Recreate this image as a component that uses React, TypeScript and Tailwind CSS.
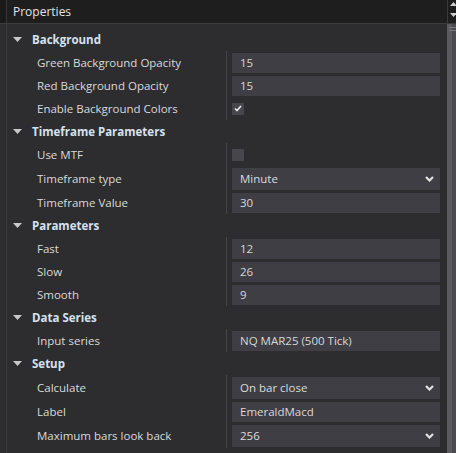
import React from "react";

type Row =
  | { kind: "cat"; label: string }
  | { kind: "text"; label: string; value: string }
  | { kind: "select"; label: string; value: string }
  | { kind: "check"; label: string; checked: boolean };

const ROWS: Row[] = [
  { kind: "cat", label: "Background" },
  { kind: "text", label: "Green Background Opacity", value: "15" },
  { kind: "text", label: "Red Background Opacity", value: "15" },
  { kind: "check", label: "Enable Background Colors", checked: true },
  { kind: "cat", label: "Timeframe Parameters" },
  { kind: "check", label: "Use MTF", checked: false },
  { kind: "select", label: "Timeframe type", value: "Minute" },
  { kind: "text", label: "Timeframe Value", value: "30" },
  { kind: "cat", label: "Parameters" },
  { kind: "text", label: "Fast", value: "12" },
  { kind: "text", label: "Slow", value: "26" },
  { kind: "text", label: "Smooth", value: "9" },
  { kind: "cat", label: "Data Series" },
  { kind: "text", label: "Input series", value: "NQ MAR25 (500 Tick)" },
  { kind: "cat", label: "Setup" },
  { kind: "select", label: "Calculate", value: "On bar close" },
  { kind: "text", label: "Label", value: "EmeraldMacd" },
  { kind: "select", label: "Maximum bars look back", value: "256" },
];

function Chevron() {
  return (
    <svg width="9" height="6" viewBox="0 0 9 6" className="shrink-0">
      <path d="M1 1 L4.5 4.5 L8 1" fill="none" stroke="#e2e2e2" strokeWidth="2.2" />
    </svg>
  );
}

function Category({ label }: { label: string }) {
  return (
    <div className="flex h-[23px] items-center pl-[6px]">
      <svg width="9" height="5" viewBox="0 0 9 5" className="shrink-0">
        <polygon points="0,0 9,0 4.5,5" fill="#c9c9c9" />
      </svg>
      <span className="ml-[10px] font-bold text-[#d7e1ee]">{label}</span>
    </div>
  );
}

function Property({ row }: { row: Exclude<Row, { kind: "cat" }> }) {
  const tall = row.kind === "select";
  return (
    <div className={`flex ${tall ? "h-[25px]" : "h-[23px]"}`}>
      <div className="flex w-[220px] items-center border-r border-[#45454a] pl-[30px] text-[#dadada]">
        {row.label}
      </div>
      <div className="flex flex-1 items-center pl-[5px] pr-[7px]">
        {row.kind === "text" && (
          <div className="flex h-5 w-full items-center bg-[#3e3e44] pl-[8px] text-[#d8d8d8]">{row.value}</div>
        )}
        {row.kind === "select" && (
          <div className="flex h-[22px] w-full items-center justify-between bg-[#3e3e44] pl-[8px] pr-[6px] text-[#dcdcdc]">
            <span>{row.value}</span>
            <Chevron />
          </div>
        )}
        {row.kind === "check" && (
          <div className="flex h-3 w-3 items-center justify-center bg-[#46464b]">
            {row.checked && (
              <svg width="8" height="7" viewBox="0 0 8 7">
                <path d="M1 3.5 L3 5.5 L7 1" fill="none" stroke="#ececec" strokeWidth="1.6" />
              </svg>
            )}
          </div>
        )}
      </div>
    </div>
  );
}

export default function App() {
  return (
    <div
      className="flex h-[453px] w-[456px] flex-col overflow-hidden bg-[#2d2d30] text-[11.5px] leading-none"
      style={{ fontFamily: '"Open Sans", "Noto Sans", sans-serif' }}
    >
      <div className="flex h-[24px] shrink-0 border-b border-[#3c3c3f] bg-[#1e1e1e]">
        <div className="w-[7px] border-r border-[#38383a] bg-[#1a1a1a]" />
        <div className="flex flex-1 items-center pl-[6px] text-[12px] text-[#e4e4e4]">Properties</div>
        <div className="flex w-[9px] flex-col items-center justify-between border-l border-[#3a3a3a] py-[2px] pl-[2px]">
          <svg width="7" height="4" viewBox="0 0 7 4">
            <polygon points="0,4 7,4 3.5,0" fill="#cfcfcf" />
          </svg>
          <svg width="7" height="4" viewBox="0 0 7 4" className="mb-[4px]">
            <polygon points="0,0 7,0 3.5,4" fill="#cfcfcf" />
          </svg>
        </div>
      </div>
      <div className="flex flex-1">
        <div className="w-[7px] border-r border-[#3c3c3f]" />
        <div className="flex-1 pt-[4px]">
          {ROWS.map((row) =>
            row.kind === "cat" ? <Category key={row.label} label={row.label} /> : <Property key={row.label} row={row} />
          )}
        </div>
        <div className="flex w-[9px]">
          <div className="relative w-[5px] bg-[#5b5b5e]">
            <div className="absolute left-[2px] top-[3px] h-px w-[7px] bg-[#7a7a7a]" />
            <div className="absolute left-[2px] top-[6px] h-px w-[7px] bg-[#7a7a7a]" />
          </div>
          <div className="w-[4px] bg-[#4c4c50]" />
        </div>
      </div>
    </div>
  );
}
